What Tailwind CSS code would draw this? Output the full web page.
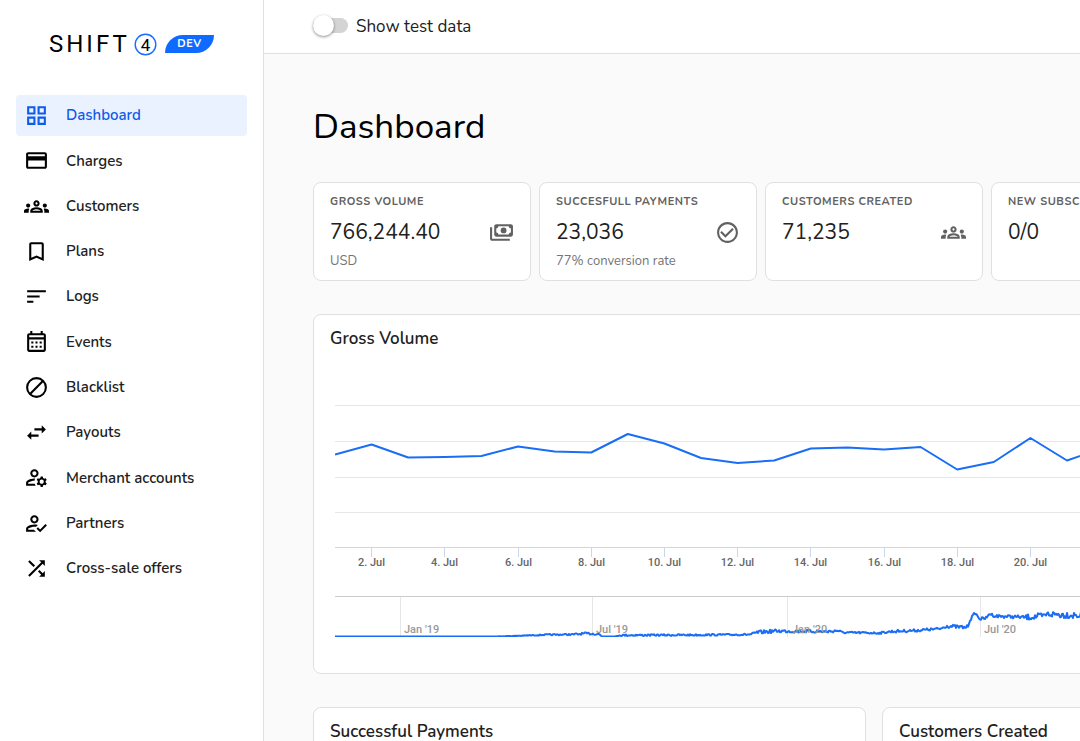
<!DOCTYPE html>
<html lang="en">
<head>
    <meta charset="UTF-8">
    <meta name="viewport" content="width=device-width, initial-scale=1.0">
    <title>Shift4 Dashboard</title>
    <script src="https://cdn.jsdelivr.net/npm/@tailwindcss/browser@4"></script>
</head>
<body class="flex h-screen overflow-hidden bg-[#fafafa] font-['Nunito','Noto_Sans',sans-serif] text-[#212121]">
    <!-- Sidebar -->
    <aside class="w-[264px] shrink-0 border-r border-[#e0e0e0] bg-white px-4 pt-8">
        <a href="#" class="flex h-6 items-center pl-[33px] text-black">
            <span class="w-[85px] font-['Roboto',sans-serif] text-2xl leading-6 tracking-[3px]">SHIFT</span>
            <svg class="size-[23px] font-['Roboto',sans-serif] text-[17px]" viewBox="0 0 23 23">
                <circle cx="11.5" cy="11.5" r="10.3" fill="none" stroke="#1a6dff" stroke-width="1.4"/>
                <text x="11.5" y="17.5" text-anchor="middle">4</text>
            </svg>
            <span class="ml-2 flex h-[18px] w-[49px] items-center justify-center rounded-tl-[18px] rounded-br-[18px] bg-[#0f6bff] text-[11px] font-bold tracking-wider text-white">DEV</span>
        </a>

        <nav class="mt-[39px] flex h-[494px] flex-col justify-between text-[15px] font-semibold">
            <a href="#" class="flex h-[41px] items-center gap-[17px] rounded bg-[#ebf2ff] pl-2 text-[#0f5bea]">
                <svg class="size-[25px]" viewBox="0 0 24 24" fill="currentColor"><path d="M3 3v8h8V3H3zm6 6H5V5h4v4zm-6 4v8h8v-8H3zm6 6H5v-4h4v4zm4-16v8h8V3h-8zm6 6h-4V5h4v4zm-6 4v8h8v-8h-8zm6 6h-4v-4h4v4z"/></svg>
                Dashboard
            </a>
            <a href="#" class="flex h-[41px] items-center gap-[17px] rounded pl-2">
                <svg class="size-[25px] text-black" viewBox="0 0 24 24" fill="currentColor"><path d="M20 4H4c-1.11 0-1.99.89-1.99 2L2 18c0 1.11.89 2 2 2h16c1.11 0 2-.89 2-2V6c0-1.11-.89-2-2-2zm0 14H4v-6h16v6zm0-10H4V6h16v2z"/></svg>
                Charges
            </a>
            <a href="#" class="flex h-[41px] items-center gap-[17px] rounded pl-2">
                <svg class="size-[25px] text-black" viewBox="0 0 24 24" fill="currentColor"><path d="M4 13c1.1 0 2-.9 2-2s-.9-2-2-2-2 .9-2 2 .9 2 2 2zm1.13 1.1c-.37-.06-.74-.1-1.13-.1-.99 0-1.93.21-2.78.58C.48 14.9 0 15.62 0 16.43V18h4.5v-1.61c0-.83.23-1.61.63-2.29zM20 13c1.1 0 2-.9 2-2s-.9-2-2-2-2 .9-2 2 .9 2 2 2zm4 3.43c0-.81-.48-1.53-1.22-1.85-.85-.37-1.79-.58-2.78-.58-.39 0-.76.04-1.13.1.4.68.63 1.46.63 2.29V18H24v-1.57zm-7.76-2.78c-1.17-.52-2.61-.9-4.24-.9s-3.07.39-4.24.9C6.68 14.13 6 15.21 6 16.39V18h12v-1.61c0-1.18-.68-2.26-1.76-2.74zM8.07 16c.09-.23.13-.39.91-.69.97-.38 1.99-.56 3.02-.56s2.05.18 3.02.56c.77.3.81.46.91.69H8.07zM12 8c.55 0 1 .45 1 1s-.45 1-1 1-1-.45-1-1 .45-1 1-1m0-2c-1.66 0-3 1.34-3 3s1.34 3 3 3 3-1.34 3-3-1.34-3-3-3z"/></svg>
                Customers
            </a>
            <a href="#" class="flex h-[41px] items-center gap-[17px] rounded pl-2">
                <svg class="size-[25px] text-black" viewBox="0 0 24 24" fill="currentColor"><path d="M17 3H7c-1.1 0-1.99.9-1.99 2L5 21l7-3 7 3V5c0-1.1-.9-2-2-2zm0 15l-5-2.18L7 18V5h10v13z"/></svg>
                Plans
            </a>
            <a href="#" class="flex h-[41px] items-center gap-[17px] rounded pl-2">
                <svg class="size-[25px] text-black" viewBox="0 0 24 24" fill="currentColor"><path d="M3 18h6v-2H3v2zM3 6v2h18V6H3zm0 7h12v-2H3v2z"/></svg>
                Logs
            </a>
            <a href="#" class="flex h-[41px] items-center gap-[17px] rounded pl-2">
                <svg class="size-[25px] text-black" viewBox="0 0 24 24" fill="currentColor"><path d="M19 4h-1V2h-2v2H8V2H6v2H5c-1.11 0-1.99.9-1.99 2L3 20c0 1.1.89 2 2 2h14c1.1 0 2-.9 2-2V6c0-1.1-.9-2-2-2zm0 16H5V10h14v10zm0-12H5V6h14v2zM9 14H7v-2h2v2zm4 0h-2v-2h2v2zm4 0h-2v-2h2v2zm-8 4H7v-2h2v2zm4 0h-2v-2h2v2zm4 0h-2v-2h2v2z"/></svg>
                Events
            </a>
            <a href="#" class="flex h-[41px] items-center gap-[17px] rounded pl-2">
                <svg class="size-[25px] text-black" viewBox="0 0 24 24" fill="none" stroke="currentColor" stroke-width="2"><circle cx="12" cy="12" r="9"/><path d="M5.6 18.4 18.4 5.6"/></svg>
                Blacklist
            </a>
            <a href="#" class="flex h-[41px] items-center gap-[17px] rounded pl-2">
                <svg class="size-[25px] text-black" viewBox="0 0 24 24" fill="currentColor"><path d="M6.99 11L3 15l3.99 4v-3H14v-2H6.99v-3zM21 9l-3.99-4v3H10v2h7.01v3L21 9z"/></svg>
                Payouts
            </a>
            <a href="#" class="flex h-[41px] items-center gap-[17px] rounded pl-2">
                <svg class="size-[25px] text-black" viewBox="0 0 24 24" fill="currentColor"><path d="M4 18v-.65c0-.34.16-.66.41-.81C6.1 15.53 8.03 15 10 15c.03 0 .05 0 .08.01.1-.7.3-1.37.59-1.98-.22-.02-.44-.03-.67-.03-2.42 0-4.68.67-6.61 1.82-.88.52-1.39 1.5-1.39 2.53V20h9.26c-.42-.6-.75-1.28-.97-2H4zM10 12c2.21 0 4-1.79 4-4s-1.79-4-4-4-4 1.79-4 4 1.79 4 4 4zm0-6c1.1 0 2 .9 2 2s-.9 2-2 2-2-.9-2-2 .9-2 2-2zM20.75 16c0-.22-.03-.42-.06-.63l1.14-1.01-1-1.73-1.45.49c-.32-.27-.68-.48-1.08-.63L18 11h-2l-.3 1.49c-.4.15-.76.36-1.08.63l-1.45-.49-1 1.73 1.14 1.01c-.03.21-.06.41-.06.63s.03.42.06.63l-1.14 1.01 1 1.73 1.45-.49c.32.27.68.48 1.08.63L16 21h2l.3-1.49c.4-.15.76-.36 1.08-.63l1.45.49 1-1.73-1.14-1.01c.03-.21.06-.41.06-.63zM17 18c-1.1 0-2-.9-2-2s.9-2 2-2 2 .9 2 2-.9 2-2 2z"/></svg>
                Merchant accounts
            </a>
            <a href="#" class="flex h-[41px] items-center gap-[17px] rounded pl-2">
                <svg class="size-[25px] text-black" viewBox="0 0 24 24" fill="currentColor"><path d="M10 12c2.21 0 4-1.79 4-4s-1.79-4-4-4-4 1.79-4 4 1.79 4 4 4zm0-6c1.1 0 2 .9 2 2s-.9 2-2 2-2-.9-2-2 .9-2 2-2zM4 18v-.65c0-.34.16-.66.41-.81C6.1 15.53 8.03 15 10 15c.6 0 1.1 0 1.6.1l1.7-1.7C12.3 13.1 11.1 13 10 13c-2.42 0-4.68.67-6.61 1.82-.88.52-1.39 1.5-1.39 2.53V20h9.5l-2-2H4zm16.6-5.5l-5.13 5.17-2.07-2.08L12 17l3.47 3.5L22 13.91z"/></svg>
                Partners
            </a>
            <a href="#" class="flex h-[41px] items-center gap-[17px] rounded pl-2">
                <svg class="size-[25px] text-black" viewBox="0 0 24 24" fill="currentColor"><path d="M10.59 9.17L5.41 4 4 5.41l5.17 5.17 1.42-1.41zM14.5 4l2.04 2.04L4 18.59 5.41 20 17.96 7.46 20 9.5V4h-5.5zm.33 9.41l-1.41 1.41 3.13 3.13L14.5 20H20v-5.5l-2.04 2.04-3.13-3.13z"/></svg>
                Cross-sale offers
            </a>
        </nav>
    </aside>

    <div class="min-w-0 flex-1">
        <header class="flex h-[54px] items-center border-b border-[#e0e0e0] bg-white pl-[49px]">
            <label for="testData" class="flex cursor-pointer items-center gap-2 text-[17px]">
                <input id="testData" type="checkbox" class="peer sr-only">
                <span class="mb-[3px] flex h-[15px] w-[35px] items-center rounded-full bg-[#d4d4d4] peer-checked:justify-end">
                    <span class="size-[21px] rounded-full bg-white shadow-[0_1px_3px_rgba(0,0,0,0.45)]"></span>
                </span>
                Show test data
            </label>
        </header>

        <main class="pt-[49px] pl-[49px]">
            <h1 class="text-[35px] leading-12 text-black">Dashboard</h1>

            <!-- Stat cards -->
            <div class="mt-[31px] grid min-w-[1122px] grid-cols-5 gap-2">
                <div class="rounded-lg border border-[#e0e0e0] bg-white px-4 pt-[11px] pb-[11px]">
                    <div class="text-[11px] leading-4 font-bold tracking-wider text-[#616161]">GROSS VOLUME</div>
                    <div class="mt-[6px] flex items-center justify-between text-[21px] leading-8">
                        766,244.40
                        <svg class="size-[25px] text-[#616161]" viewBox="0 0 24 24" fill="currentColor" fill-rule="evenodd"><path d="M7 4h14c1.1 0 2 .9 2 2v8c0 1.1-.9 2-2 2H7c-1.1 0-2-.9-2-2V6c0-1.1.9-2 2-2zM9 6c0 1.1-.9 2-2 2v4c1.1 0 2 .9 2 2h10c0-1.1.9-2 2-2V8c-1.1 0-2-.9-2-2H9z"/><circle cx="14" cy="10" r="2.8"/><path d="M3 7H1v11c0 1.1.9 2 2 2h17v-2H3V7z"/></svg>
                    </div>
                    <div class="mt-[5px] text-[13px] leading-4 text-[#757575]">USD</div>
                </div>
                <div class="rounded-lg border border-[#e0e0e0] bg-white px-4 pt-[11px] pb-[11px]">
                    <div class="text-[11px] leading-4 font-bold tracking-wider text-[#616161]">SUCCESFULL PAYMENTS</div>
                    <div class="mt-[6px] flex items-center justify-between text-[21px] leading-8">
                        23,036
                        <svg class="size-[25px] text-[#616161]" viewBox="0 0 24 24" fill="currentColor"><path d="M16.59 7.58L10 14.17l-3.59-3.58L5 12l5 5 8-8-1.41-1.42zM12 2C6.48 2 2 6.48 2 12s4.48 10 10 10 10-4.48 10-10S17.52 2 12 2zm0 18c-4.42 0-8-3.58-8-8s3.58-8 8-8 8 3.58 8 8-3.58 8-8 8z"/></svg>
                    </div>
                    <div class="mt-[5px] text-[13px] leading-4 text-[#757575]">77% conversion rate</div>
                </div>
                <div class="rounded-lg border border-[#e0e0e0] bg-white px-4 pt-[11px] pb-[11px]">
                    <div class="text-[11px] leading-4 font-bold tracking-wider text-[#616161]">CUSTOMERS CREATED</div>
                    <div class="mt-[6px] flex items-center justify-between text-[21px] leading-8">
                        71,235
                        <svg class="size-[25px] text-[#616161]" viewBox="0 0 24 24" fill="currentColor"><path d="M4 13c1.1 0 2-.9 2-2s-.9-2-2-2-2 .9-2 2 .9 2 2 2zm1.13 1.1c-.37-.06-.74-.1-1.13-.1-.99 0-1.93.21-2.78.58C.48 14.9 0 15.62 0 16.43V18h4.5v-1.61c0-.83.23-1.61.63-2.29zM20 13c1.1 0 2-.9 2-2s-.9-2-2-2-2 .9-2 2 .9 2 2 2zm4 3.43c0-.81-.48-1.53-1.22-1.85-.85-.37-1.79-.58-2.78-.58-.39 0-.76.04-1.13.1.4.68.63 1.46.63 2.29V18H24v-1.57zm-7.76-2.78c-1.17-.52-2.61-.9-4.24-.9s-3.07.39-4.24.9C6.68 14.13 6 15.21 6 16.39V18h12v-1.61c0-1.18-.68-2.26-1.76-2.74zM8.07 16c.09-.23.13-.39.91-.69.97-.38 1.99-.56 3.02-.56s2.05.18 3.02.56c.77.3.81.46.91.69H8.07zM12 8c.55 0 1 .45 1 1s-.45 1-1 1-1-.45-1-1 .45-1 1-1m0-2c-1.66 0-3 1.34-3 3s1.34 3 3 3 3-1.34 3-3-1.34-3-3-3z"/></svg>
                    </div>
                </div>
                <div class="rounded-lg border border-[#e0e0e0] bg-white px-4 pt-[11px] pb-[11px]">
                    <div class="text-[11px] leading-4 font-bold tracking-wider text-[#616161]">NEW SUBSCRIPTIONS</div>
                    <div class="mt-[6px] text-[21px] leading-8">0/0</div>
                </div>
            </div>

            <!-- Gross volume chart -->
            <section class="mt-[33px] min-w-[1122px] rounded-lg border border-[#e0e0e0] bg-white px-4 pt-3 pb-[13px]">
                <h2 class="text-[17px] leading-6 font-semibold">Gross Volume</h2>
                <svg id="volumeChart" class="mt-[9px] ml-[5px] h-[300px] w-[1080px] font-['Roboto',sans-serif] text-[11px]">
                    <clipPath id="navigatorClip"><rect x="0" y="237" width="1080" height="40"/></clipPath>
                    <g stroke="#e6e6e6" stroke-width="1">
                        <path d="M0 45.5H1080M0 81.5H1080M0 117.5H1080M0 152.5H1080"/>
                        <path d="M65.5 237V277M257.5 237V277M452.5 237V277M645.5 237V277"/>
                    </g>
                    <path d="M0 187.5H1080" stroke="#ccd6eb"/>
                    <path d="M0 236.5H1080" stroke="#cccccc"/>
                    <g id="ticks" stroke="#ccd6eb"></g>
                    <g id="dayLabels" fill="#666666" font-weight="500" text-anchor="middle"></g>
                    <polyline id="volumeLine" fill="none" stroke="#1a6df5" stroke-width="2" stroke-linejoin="round"/>
                    <polyline id="navigatorLine" fill="none" stroke="#1a6df5" stroke-width="2" stroke-linejoin="round" clip-path="url(#navigatorClip)"/>
                    <g fill="#999999" font-weight="500">
                        <text x="69" y="273">Jan '19</text>
                        <text x="261" y="273">Jul '19</text>
                        <text x="457" y="273">Jan '20</text>
                        <text x="649" y="273">Jul '20</text>
                    </g>
                </svg>
            </section>

            <div class="mt-[33px] grid min-w-[1122px] grid-cols-2 gap-4">
                <section class="h-[360px] rounded-lg border border-[#e0e0e0] bg-white px-4 pt-3">
                    <h2 class="text-[17px] leading-6 font-semibold">Successful Payments</h2>
                </section>
                <section class="h-[360px] rounded-lg border border-[#e0e0e0] bg-white px-4 pt-3">
                    <h2 class="text-[17px] leading-6 font-semibold">Customers Created</h2>
                </section>
            </div>
        </main>
    </div>

    <script>
        const ns = "http://www.w3.org/2000/svg";
        const dayWidth = 36.6;

        // daily volume, starting at 1 Jul
        const volume = [94.5, 84.5, 97.5, 97, 96, 86.5, 91.5, 92.5, 74, 83.5, 98, 103, 100.5, 88.5, 87.5, 89.5, 87, 109.5, 102, 78, 100.5, 88, 92, 90, 95, 86, 89, 97, 91, 88];
        document.getElementById("volumeLine").setAttribute("points", volume.map((y, i) => (i * dayWidth).toFixed(1) + "," + y).join(" "));

        for (let day = 2; day <= 28; day += 2) {
            const x = Math.floor((day - 1) * dayWidth) + 0.5;
            const tick = document.createElementNS(ns, "path");
            tick.setAttribute("d", "M" + x + " 188V197");
            document.getElementById("ticks").appendChild(tick);

            const label = document.createElementNS(ns, "text");
            label.setAttribute("x", x);
            label.setAttribute("y", 206);
            label.textContent = day + ". Jul";
            document.getElementById("dayLabels").appendChild(label);
        }

        // navigator: [x, y, jitter]
        const history = [
            [0, 276.5, 0], [160, 276.5, 0.3], [190, 275.6, 0.5], [210, 274.8, 0.7], [240, 274.4, 1.1], [250, 273.5, 1.1], [264, 274, 0.4],
            [267, 276.5, 0], [281, 276.5, 0.2], [285, 275.2, 0.9], [355, 275, 0.9], [415, 274.5, 1], [422, 272.5, 1.8], [440, 271, 1.6],
            [495, 271.5, 1.5], [503, 270.5, 1.3], [507, 272.5, 1], [545, 273, 1], [556, 271.5, 1.4], [580, 270.5, 1.4], [605, 268.8, 1.4], [612, 266, 1.8],
            [630, 267.5, 1.3], [633, 266, 1], [635, 260, 1.5], [640, 253, 1.2], [645, 259, 1.5], [652, 258, 1.5], [654, 253.5, 1.5], [660, 256, 1.6],
            [685, 257, 1.6], [690, 257.5, 3], [708, 256, 2.2], [713, 254, 3.2], [725, 254.5, 3.5], [745, 255.5, 3.5], [1080, 253, 3.5]
        ];
        let seed = 7;
        const points = [];
        for (let i = 0; i < history.length - 1; i++) {
            const [x0, y0, j0] = history[i];
            const [x1, y1] = history[i + 1];
            for (let x = x0; x < x1; x += 1) {
                seed = (seed * 16807) % 2147483647;
                const noise = (seed / 2147483647 - 0.5) * 2 * j0;
                points.push(x + "," + Math.min(276.5, y0 + (y1 - y0) * (x - x0) / (x1 - x0) + noise).toFixed(1));
            }
        }
        document.getElementById("navigatorLine").setAttribute("points", points.join(" "));
    </script>
</body>
</html>
